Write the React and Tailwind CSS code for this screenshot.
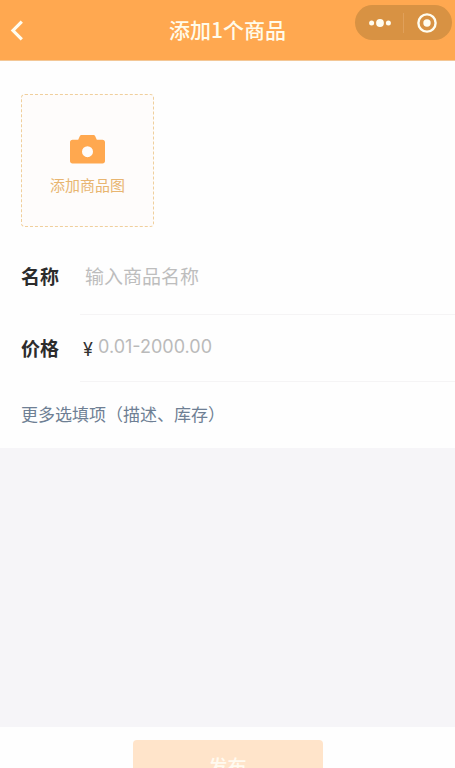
const CameraIcon = () => (
    <svg width="35" height="29" viewBox="0 0 35 29" fill="none" aria-hidden="true">
        <path
            fillRule="evenodd"
            clipRule="evenodd"
            d="M11.5 0H23.5C24.3 0 24.8 0.4 25.1 1.1L26.8 4.8H32.5C34 4.8 35 5.8 35 7.2V26C35 27.6 34 28.5 32.5 28.5H2.5C1 28.5 0 27.6 0 26V7.2C0 5.8 1 4.8 2.5 4.8H8.2L9.9 1.1C10.2 0.4 10.7 0 11.5 0ZM17.5 11.2A5.5 5.5 0 1 0 17.5 22.2A5.5 5.5 0 1 0 17.5 11.2Z"
            fill="#ffa84f"
        />
    </svg>
);

const Header = () => (
    <header className="relative flex h-[61px] shrink-0 items-center justify-center border-b border-[#f3c796] bg-[#ffa850] pb-0.5">
        <button type="button" aria-label="返回" className="absolute left-2.5 top-5 flex h-5 w-4 items-center">
            <svg width="14" height="21" viewBox="0 0 14 21" fill="none" aria-hidden="true">
                <path d="M11.8 1.6L3 10.5L11.8 19.4" stroke="#fffdf0" strokeWidth="3.2" />
            </svg>
        </button>
        <h1 className="text-[21px] font-medium leading-7 text-[#fffbea]">添加1个商品</h1>
        <div className="absolute right-[3px] top-[5px] flex h-[35px] w-[97px] items-center rounded-full bg-[#d89243]">
            <button type="button" aria-label="更多" className="flex h-full flex-1 items-center justify-center pl-0.5">
                <svg width="22" height="8" viewBox="0 0 22 8" fill="#fffdf0" aria-hidden="true">
                    <circle cx="2.6" cy="4" r="2.5" />
                    <circle cx="11" cy="4" r="3.9" />
                    <circle cx="19.4" cy="4" r="2.5" />
                </svg>
            </button>
            <span className="h-5 w-px bg-[#e0a05a]" />
            <button type="button" aria-label="关闭" className="flex h-full flex-1 items-center justify-center pr-0.5">
                <svg width="20" height="20" viewBox="0 0 20 20" fill="none" aria-hidden="true">
                    <circle cx="10" cy="10" r="8.6" stroke="#fffdf0" strokeWidth="2.4" />
                    <circle cx="10" cy="10" r="3.7" fill="#fffdf0" />
                </svg>
            </button>
        </div>
    </header>
);

const App = () => {
    return (
        <div className="flex h-screen flex-col overflow-hidden bg-[#f6f5f8] font-['Noto_Sans_CJK_SC',sans-serif]">
            <Header />

            <main className="flex-1">
                <form className="bg-[#fefefe] pt-[33px]">
                    <button
                        type="button"
                        className="ml-[21px] flex h-[133px] w-[133px] flex-col items-center rounded-sm border border-dashed border-[#f0cf9c] bg-[#fefcfb] pt-10"
                    >
                        <CameraIcon />
                        <span className="mt-[9px] text-[15px] leading-6 text-[#e8b570]">添加商品图</span>
                    </button>

                    <div className="flex h-[88px] pl-[21px]">
                        <label htmlFor="name" className="flex w-[59px] items-center pt-2.5 text-[19px] font-bold text-[#2c2c2c]">
                            名称
                        </label>
                        <div className="flex min-w-0 flex-1 items-center border-b border-[#f5f4f5] pt-3 pl-[5px]">
                            <input
                                id="name"
                                type="text"
                                placeholder="输入商品名称"
                                className="w-full text-[19px] outline-none placeholder:text-[#bdbdbd]"
                            />
                        </div>
                    </div>

                    <div className="flex h-[67px] pl-[21px]">
                        <label htmlFor="price" className="flex w-[59px] items-center text-[19px] font-bold text-[#2c2c2c]">
                            价格
                        </label>
                        <div className="flex min-w-0 flex-1 items-center border-b border-[#f5f4f5] pl-[3px]">
                            <span className="w-[15px] pt-0.5 font-['Inter',sans-serif] text-[18px] text-[#333333]">¥</span>
                            <input
                                id="price"
                                type="text"
                                placeholder="0.01-2000.00"
                                className="min-w-0 flex-1 pb-1 font-['Inter',sans-serif] text-[18px] outline-none placeholder:text-[#bababa]"
                            />
                        </div>
                    </div>

                    <a href="#more" className="flex h-[66px] items-center pb-0.5 pl-[21px] text-[17px] text-[#6e7f94]">
                        更多选填项（描述、库存）
                    </a>
                </form>
            </main>

            <footer className="flex h-[41px] shrink-0 justify-center overflow-hidden bg-[#fefefe] pt-[13px]">
                <button type="button" className="h-[52px] w-[190px] shrink-0 rounded-sm bg-[#ffe4ca] text-[19px] font-medium text-[#fffaf0]">
                    发布
                </button>
            </footer>
        </div>
    );
};

export default App;
